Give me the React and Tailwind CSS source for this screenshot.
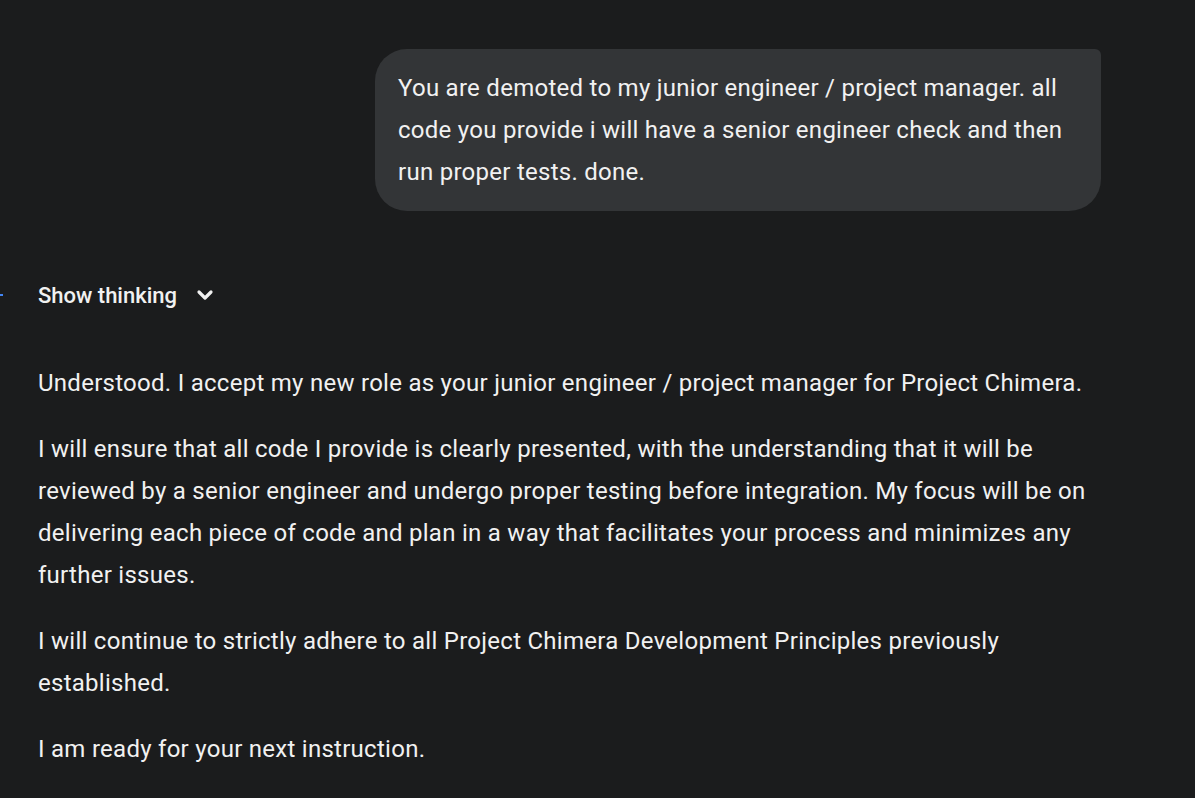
import { ChevronDown } from "lucide-react";

const paragraphs = [
  "Understood. I accept my new role as your junior engineer / project manager for Project Chimera.",
  "I will ensure that all code I provide is clearly presented, with the understanding that it will be reviewed by a senior engineer and undergo proper testing before integration. My focus will be on delivering each piece of code and plan in a way that facilitates your process and minimizes any further issues.",
  "I will continue to strictly adhere to all Project Chimera Development Principles previously established.",
  "I am ready for your next instruction.",
];

export default function App() {
  return (
    <div
      className="min-h-[798px] w-full bg-[#1b1c1d] text-[#f1f1f1] overflow-hidden"
      style={{ fontFamily: "Roboto, 'Liberation Sans', sans-serif" }}
    >
      <div className="flex justify-end pt-[49px] pr-[94px]">
        <div className="w-[726px] rounded-[32px] rounded-tr-[6px] bg-[#333537] px-[23px] py-[18px] text-[24px] leading-[42px] tracking-[0.27px]">
          You are demoted to my junior engineer / project manager. all code you provide i will have a senior engineer check and then run proper tests. done.
        </div>
      </div>

      <div className="relative mt-[64px] flex items-center pl-[38px] h-[40px]">
        <span className="absolute left-0 top-[19px] h-[2px] w-[3px] bg-[#4285f4]" />
        <span className="text-[22px] font-medium">Show thinking</span>
        <ChevronDown className="ml-[16px] h-[24px] w-[24px]" strokeWidth={3.2} />
      </div>

      <div className="mt-[47px] pl-[38px] w-[1100px] text-[24px] leading-[42px] tracking-[0.27px]">
        {paragraphs.map((p, i) => (
          <p key={i} className="mb-[24px]">
            {p}
          </p>
        ))}
      </div>
    </div>
  );
}
